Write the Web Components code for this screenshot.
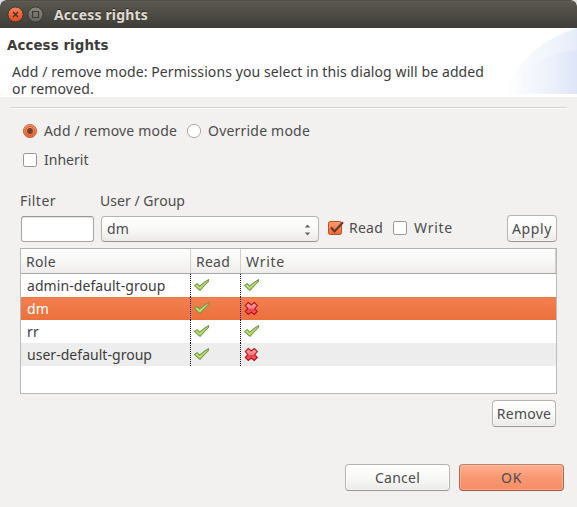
<!DOCTYPE html>
<html lang="en">
<head>
<meta charset="utf-8">
<title>Access rights</title>
<style>
html,body{margin:0;height:507px;overflow:hidden;background:#ddd}
body{font:14px/17px "Noto Sans","Open Sans",sans-serif;color:#4c4c4c}
</style>
</head>
<body>
<access-dialog></access-dialog>
<script>
const define=(name,html,setup)=>customElements.define(name,class extends HTMLElement{
  connectedCallback(){
    if(this.shadowRoot)return;
    const root=this.attachShadow({mode:'open'});
    const t=document.createElement('template');
    t.innerHTML=html;
    root.append(t.content.cloneNode(true));
    if(setup)setup(this,root);
  }
});

/* Label whose letter spacing is adjusted to fill the width given by "w". */
define('fit-text',`<style>:host{display:block;white-space:pre;flex:none}span{display:inline-block}</style><span></span>`,(el,root)=>{
  const s=root.querySelector('span'),w=+el.getAttribute('w');
  s.textContent=el.getAttribute('text');
  const n=s.textContent.length;
  s.style.letterSpacing=((w-s.getBoundingClientRect().width)/n)+'px';
  el.style.width=w+'px';
});

define('title-bar',`<style>
:host{display:flex;align-items:center;height:28px;box-sizing:border-box;padding:1px 0 0 7px;background:linear-gradient(#504d46 0,#504d46 1px,#66635a 1px,#5a574f 2px,#3e3d38 28px);border-radius:6px 6px 0 0;color:#dfdbd2;font-weight:bold;text-shadow:0 -1px #2b2a26}
svg{display:block;margin-right:3px}
fit-text{margin-left:7px}
</style>
<svg width="17" height="17"><defs><linearGradient id="a" x2="0" y2="1"><stop stop-color="#f5845c"/><stop offset="1" stop-color="#e2491b"/></linearGradient></defs><circle cx="8.5" cy="8.5" r="7.6" fill="url(#a)" stroke="#373631"/><path d="M6 6l5 5M11 6l-5 5" stroke="#48301f" stroke-width="1.4"/></svg>
<svg width="17" height="17"><defs><linearGradient id="b" x2="0" y2="1"><stop stop-color="#898780"/><stop offset="1" stop-color="#66645c"/></linearGradient></defs><circle cx="8.5" cy="8.5" r="7.6" fill="url(#b)" stroke="#373631"/><path d="M5.5 5.5h6v6h-6z" fill="none" stroke="#3c3b37" stroke-width="1.2"/></svg>
<fit-text w="94" text="Access rights"></fit-text>`);

define('dialog-header',`<style>
:host{display:flex;justify-content:space-between;height:69px;background:#fff;color:#3c3c3c}
h1{margin:9px 0 0 7px;font:bold 13.4px/17px "DejaVu Sans",sans-serif}
.d{margin:9px 0 0 12px}
svg{display:block}
</style>
<div><h1><fit-text w="101.5" text="Access rights"></fit-text></h1><div class="d"><fit-text w="472" text="Add / remove mode: Permissions you select in this dialog will be added"></fit-text><fit-text w="82" text="or removed."></fit-text></div></div>
<svg width="75" height="66"><defs><linearGradient id="g"><stop stop-color="#fff"/><stop offset=".4" stop-color="#f1f5fc"/><stop offset="1" stop-color="#e5ebf9"/></linearGradient><linearGradient id="h"><stop stop-color="#fff" stop-opacity="0"/><stop offset="1" stop-color="#dbe3f6"/></linearGradient></defs>
<path d="M2 66C12 37 40 10 75 0V66z" fill="url(#g)" opacity=".75"/><path d="M40 28C48 16 60 5 75 1V66H33V37z" fill="url(#h)" opacity=".45"/><path d="M33 37Q52 23 75 22V66H3Q16 48 33 37z" fill="url(#h)" opacity=".8"/></svg>`);

define('choice-box',`<style>
:host{display:block;flex:none;width:14px;height:14px}
svg{display:block;overflow:visible}
</style><svg width="14" height="14"></svg>`,(el,root)=>{
  const on=el.hasAttribute('checked'),radio=el.getAttribute('kind')==='radio';
  const grad='<linearGradient id="o" x2="0" y2="1"><stop stop-color="#fb9b70"/><stop offset="1" stop-color="#ee6834"/></linearGradient>';
  root.querySelector('svg').innerHTML=grad+(radio
    ?`<circle cx="7" cy="7" r="6.6" fill="${on?'url(#o)':'#fff'}" stroke="${on?'#c1603d':'#a29f9a'}" stroke-width=".9"/>`+(on?'<circle cx="7" cy="7" r="4.6" fill="none" stroke="#cb5d36" stroke-width=".8"/><circle cx="7" cy="7" r="2.9" fill="#74402c"/>':'')
    :`<rect x=".5" y=".5" width="13" height="13" rx="1.8" fill="${on?'url(#o)':'#fff'}" stroke="${on?'#bd4e28':'#989590'}"/>`+(on?'<path d="M3 6.5L6.5 10.5L15 1.2" fill="none" stroke="#61392c" stroke-width="2.1"/>':''));
});

define('push-button',`<style>
:host{display:flex;flex:none;align-items:center;justify-content:center;box-sizing:border-box;height:27px;border:1px solid #b7b4b0;border-bottom-color:#989590;border-radius:4px;background:linear-gradient(#fff,#f9f9f8 50%,#ebeae8);box-shadow:inset 0 0 0 1px #ffffff90}
:host([primary]){border-color:#b98570 #a96e58 #995d49;background:linear-gradient(#ffb191,#f99772 50%,#f58d65);box-shadow:inset 0 0 0 1px #ffc0a580}
</style><slot></slot>`);

define('combo-box',`<style>
:host{display:flex;align-items:center;justify-content:space-between;box-sizing:border-box;width:218px;height:26px;padding:0 6px 0 5px;border:1px solid #b7b4b0;border-bottom-color:#989590;border-radius:4px;background:linear-gradient(#fff,#f9f9f8 50%,#ebeae8)}
svg{margin-top:2px}
</style><slot></slot><svg width="9" height="14"><path d="M1.7 4.5L4.5 1.5l2.8 3zM1.7 9.5L4.5 12.5l2.8-3z" fill="#67645f"/></svg>`);

define('text-field',`<style>
:host{display:block;box-sizing:border-box;width:73px;height:26px;border:1px solid #a8a5a0;border-top-color:#98958f;border-radius:3px;background:#fff;box-shadow:inset 0 1px #e8e7e5}
</style>`);

define('state-icon',`<style>:host{display:block}svg{display:block;overflow:visible}</style><svg width="16" height="14"></svg>`,(el,root)=>{
  root.querySelector('svg').innerHTML=el.getAttribute('kind')==='yes'
   ?'<linearGradient id="y" x2="0" y2="1"><stop stop-color="#ddf4b9"/><stop offset="1" stop-color="#b0dc58"/></linearGradient><path d="M.6 6.4L3.2 4.8L5.6 7.2L10.5 3.2L14.5 .8V2.3L10.2 6.7L6.1 11.3L4.9 10.6z" fill="url(#y)" stroke="#759a42" stroke-width="1.1"/>'
   :'<linearGradient id="n" x2="0" y2="1"><stop stop-color="#ffb3b5"/><stop offset=".5" stop-color="#f77a7e"/><stop offset=".55" stop-color="#ee3d45"/><stop offset="1" stop-color="#f7686c"/></linearGradient><path d="M3.5 .5L6.5 3L9.5 .5L12.5 3.5L10 6.5L12.5 9.5L9.5 12.5L6.5 10L3.5 12.5L.5 9.5L3 6.5L.5 3.5z" transform="translate(.8 0)" fill="url(#n)" stroke="#b3101a" stroke-width="1.1"/>';
});

define('role-row',`<style>
:host{display:grid;grid-template-columns:169px 50px 1fr;height:23px;background:#fff;color:#3c3c3c}
:host([alt]){background:#ededed}
:host([selected]){background:linear-gradient(#e96e3b 0,#f27f50 1px,#ec703c);color:#fff}
div{padding:3px 0 0 6px}
.c{padding:5px 0 0 4px;background:repeating-linear-gradient(#111 0 1px,transparent 1px 2px) left/1px 100% no-repeat}
</style><div><slot></slot></div><div class="c"><state-icon kind="yes"></state-icon></div><div class="c"><slot name="write"></slot></div>`);

define('role-table',`<style>
:host{display:block;box-sizing:border-box;width:537px;height:146px;border:1px solid #bdbbb7;border-top-color:#b2b0ac;background:#fff}
.h{display:grid;grid-template-columns:169px 50px 1fr;height:24px;border-bottom:1px solid #a9a7a3;background:linear-gradient(#fff,#f8f8f7 50%,#eeedeb)}
.h div{padding:4px 0 0 5px;border-left:1px solid #d2d0cd}
.h div:first-child{border:0}
.h div:last-child{border-right:1px solid #d2d0cd}
</style>
<div class="h"><div><fit-text w="30" text="Role"></fit-text></div><div><fit-text w="34" text="Read"></fit-text></div><div><fit-text w="39" text="Write"></fit-text></div></div>
<role-row><fit-text w="138.5" text="admin-default-group"></fit-text><state-icon slot="write" kind="yes"></state-icon></role-row>
<role-row selected><fit-text w="22" text="dm"></fit-text><state-icon slot="write" kind="no"></state-icon></role-row>
<role-row><fit-text w="12" text="rr"></fit-text><state-icon slot="write" kind="yes"></state-icon></role-row>
<role-row alt><fit-text w="125" text="user-default-group"></fit-text><state-icon slot="write" kind="no"></state-icon></role-row>`);

/* A check box or radio button followed by its label. */
customElements.define('option-item',class extends HTMLElement{
  connectedCallback(){
    if(this.shadowRoot)return;
    const a=n=>this.getAttribute(n)||'';
    this.attachShadow({mode:'open'}).innerHTML=`<style>:host{display:flex;flex:none;align-items:center;gap:7px;height:17px}choice-box{margin-top:1px}</style><choice-box kind="${a('kind')}" ${this.hasAttribute('checked')?'checked':''}></choice-box><fit-text w="${a('w')}" text="${a('text')}"></fit-text>`;
  }
});

define('access-dialog',`<style>
:host{display:flex;flex-direction:column;width:577px;height:507px;box-sizing:border-box;border-radius:6px 6px 0 0;background:#f2f1f0;overflow:hidden}
hr{margin:10px 10px 0;border:0;height:1px;background:#d6d4d2;border-bottom:1px solid #fafafa;flex:none}
main{padding-left:20px}
.r{display:flex}
.modes{padding:13px 0 0 3px;gap:10px}
.inherit{padding:12px 0 0 3px}
.labels{padding-top:24px;gap:44px}
.fields{margin-top:6px;height:27px;align-items:center;padding-left:1px}
combo-box{margin:0 9px 0 7px}
.fields option-item{margin-bottom:2px}
.fields option-item+option-item{margin-left:10px}
.apply{width:50px;margin-left:54px}
role-table{margin-top:6px}
.remove{margin:6px 0 0 472px;width:64px}
.foot{padding:37px 13px 0 0;justify-content:flex-end;gap:9px}
.foot push-button{width:105px}
</style>
<title-bar></title-bar><dialog-header></dialog-header><hr>
<main>
<div class="r modes"><option-item kind="radio" checked w="133" text="Add / remove mode"></option-item><option-item kind="radio" w="102" text="Override mode"></option-item></div>
<div class="r inherit"><option-item kind="check" w="44.5" text="Inherit"></option-item></div>
<div class="r labels"><fit-text w="36" text="Filter"></fit-text><fit-text w="85" text="User / Group"></fit-text></div>
<div class="r fields"><text-field></text-field><combo-box><fit-text w="22" text="dm"></fit-text></combo-box><option-item kind="check" checked w="34" text="Read"></option-item><option-item kind="check" w="39" text="Write"></option-item><push-button class="apply"><fit-text w="40" text="Apply"></fit-text></push-button></div>
<role-table></role-table>
<push-button class="remove"><fit-text w="54.5" text="Remove"></fit-text></push-button>
</main>
<div class="r foot"><push-button><fit-text w="45" text="Cancel"></fit-text></push-button><push-button primary><fit-text w="21" text="OK"></fit-text></push-button></div>`);
</script>
</body>
</html>
